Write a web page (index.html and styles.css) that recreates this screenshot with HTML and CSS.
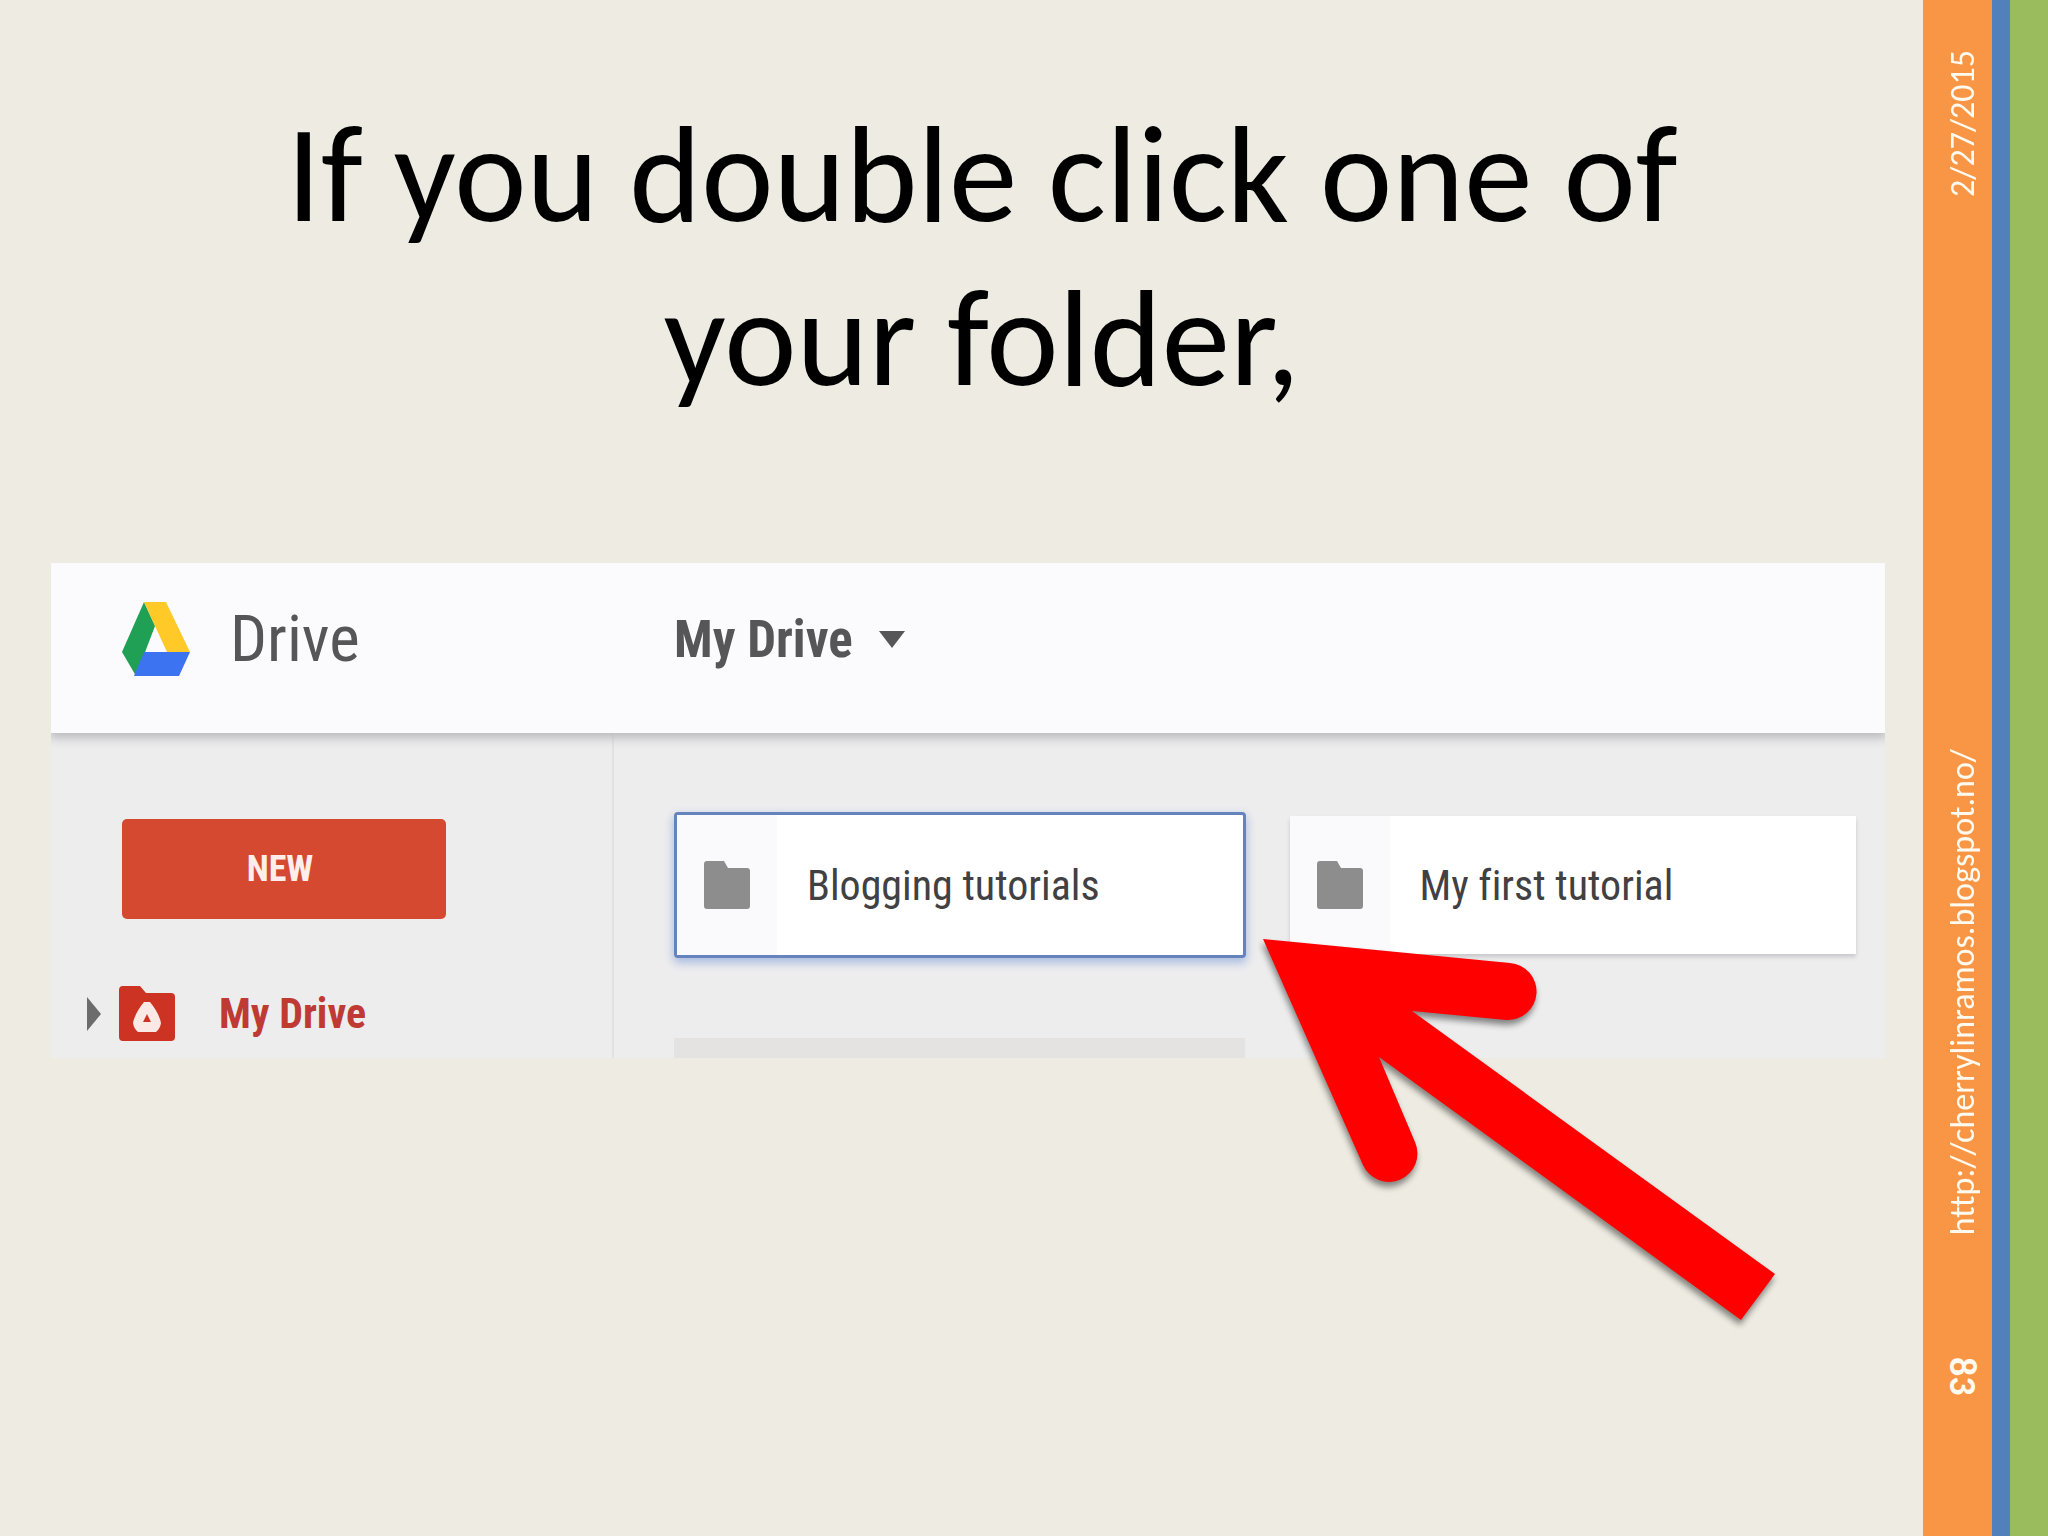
FILE: index.html
```html
<!DOCTYPE html>
<html lang="en">
<head>
<meta charset="utf-8">
<meta name="viewport" content="width=device-width, initial-scale=1">
<title>If you double click one of your folder,</title>
<link rel="stylesheet" href="styles.css">
</head>
<body>
<div class="slide">
  <main class="content">
    <h1 class="title">If you double click one of<br>your folder,</h1>

    <section class="drive" aria-label="Drive">
      <header class="drive-header">
        <div class="brand">
          <svg class="brand-logo" viewBox="0 0 68 74" aria-hidden="true">
            <path fill="#1fa055" d="M22 0 33 24 14 74 0 50z"/>
            <path fill="#ffc928" d="M22 0H44L68 50H45z"/>
            <path fill="#3b73f0" d="M22 50H68L57 74H12z"/>
          </svg>
          <span class="brand-name">Drive</span>
        </div>
        <button class="location" type="button">My Drive
          <svg class="location-caret" viewBox="0 0 26 17" aria-hidden="true"><path fill="#565558" d="M0 0H26L13 17z"/></svg>
        </button>
      </header>

      <div class="drive-body">
        <nav class="sidebar">
          <button class="new-button" type="button">NEW</button>
          <a class="tree-item" href="#">
            <svg class="tree-arrow" viewBox="0 0 14 34" aria-hidden="true"><path fill="#6c6c6c" d="M0 0 14 17 0 34z"/></svg>
            <svg class="tree-icon" viewBox="0 0 56 55" aria-hidden="true">
              <path fill="#cd3322" d="M4 0H21L27 7H52Q56 7 56 11V51Q56 55 52 55H4Q0 55 0 51V4Q0 0 4 0z"/>
              <path fill="#fbe9e5" fill-rule="evenodd" d="M25 16H31Q40 27 42 37 41 43 37 46H19Q15 43 14 37 16 27 25 16zM28 28 24 36H32z"/>
            </svg>
            <span class="tree-label">My Drive</span>
          </a>
        </nav>

        <div class="files">
          <div class="folders">
            <button class="folder folder-selected" type="button">
              <span class="folder-icon"><svg viewBox="0 0 46 48" aria-hidden="true"><path fill="#8e8d8e" d="M3 0H20L24 7H43Q46 7 46 10V45Q46 48 43 48H3Q0 48 0 45V3Q0 0 3 0z"/></svg></span>
              <span class="folder-name">Blogging tutorials</span>
            </button>
            <button class="folder" type="button">
              <span class="folder-icon"><svg viewBox="0 0 46 48" aria-hidden="true"><path fill="#8e8d8e" d="M3 0H20L24 7H43Q46 7 46 10V45Q46 48 43 48H3Q0 48 0 45V3Q0 0 3 0z"/></svg></span>
              <span class="folder-name">My first tutorial</span>
            </button>
          </div>
          <div class="next-row"></div>
        </div>
      </div>

      <svg class="arrow" viewBox="1243 930 550 410" aria-hidden="true">
        <path fill="#ff0000" d="M1263 939 1510 963A28 28 0 0 1 1506 1020L1412 1011 1775 1274 1741 1320 1379 1057 1415 1142A28 28 0 0 1 1363 1165z"/>
      </svg>
    </section>
  </main>

  <aside class="rail">
    <time class="rail-date" datetime="2015-02-27">2/27/2015</time>
    <a class="rail-link" href="http://cherrylinramos.blogspot.no/">http://cherrylinramos.blogspot.no/</a>
    <span class="rail-page">83</span>
  </aside>
  <div class="stripe-blue"></div>
  <div class="stripe-green"></div>
</div>
</body>
</html>
```
FILE: styles.css
```css
* {
  box-sizing: border-box;
}

body {
  margin: 0;
  background: #eeebe2;
  color: #000;
  font-family: Carlito, Lato, sans-serif;
  font-variant-ligatures: none;
}

button {
  border: 0;
  padding: 0;
  background: none;
  color: inherit;
  font: inherit;
  text-align: left;
}

a {
  color: inherit;
  text-decoration: none;
}

svg {
  display: block;
  flex: none;
}

.slide {
  display: flex;
  min-height: 100vh;
}

.content {
  flex: 1;
  min-width: 0;
  padding: 93px 38px 0 51px;
}

.title {
  margin: 0 0 142px;
  padding-left: 28px;
  font-size: 137px;
  font-weight: 400;
  line-height: 164px;
  text-align: center;
}

/* Drive window */

.drive {
  position: relative;
  background: #eeedee;
  font-family: "Roboto Condensed", Roboto, sans-serif;
}

.drive-header,
.drive-body {
  display: grid;
  grid-template-columns: 563px 1fr;
}

.drive-header {
  position: relative;
  align-items: center;
  height: 170px;
  padding-bottom: 18px;
  background: #fbfafc;
  box-shadow: 0 3px 10px 2px #b9b8bb;
  clip-path: inset(0 0 -20px 0);
}

.brand {
  display: flex;
  align-items: center;
  gap: 40px;
  padding-left: 71px;
  color: #565558;
}

.brand-logo {
  width: 68px;
  height: 74px;
}

.brand-name {
  font-size: 65px;
}

.location {
  display: flex;
  align-items: center;
  gap: 26px;
  padding-left: 60px;
  color: #565558;
  font-size: 51px;
  font-weight: 700;
}

.location-caret {
  width: 26px;
  height: 17px;
}

.sidebar {
  padding: 86px 0 0 36px;
  border-right: 2px solid #e2e1e4;
}

.new-button {
  display: block;
  width: 324px;
  height: 100px;
  margin-left: 35px;
  padding-right: 8px;
  border-radius: 5px;
  background: #d4492f;
  color: #fdeeea;
  font-size: 36px;
  font-weight: 700;
  text-align: center;
}

.tree-item {
  display: flex;
  align-items: center;
  height: 55px;
  margin-top: 67px;
  color: #bf3a33;
}

.tree-arrow {
  width: 14px;
  height: 34px;
}

.tree-icon {
  width: 56px;
  height: 55px;
  margin: 0 44px 0 18px;
}

.tree-label {
  font-size: 42px;
  font-weight: 700;
}

.files {
  padding: 79px 29px 0 60px;
}

.folders {
  display: grid;
  grid-template-columns: 571fr 566fr;
  gap: 44px;
}

.folder {
  display: flex;
  height: 138px;
  margin: 4px 0;
  background: #fff;
  box-shadow: 0 3px 4px #c8c7ca;
  color: #414043;
  font-size: 42px;
}

.folder-selected {
  height: 146px;
  margin: 0;
  border: 3px solid #6583bd;
  border-radius: 4px;
  box-shadow: 0 4px 10px 1px #a9bce0;
}

.folder-icon {
  display: flex;
  align-items: center;
  align-self: stretch;
  width: 100px;
  padding-left: 27px;
  background: #faf9fb;
}

.folder-icon svg {
  width: 46px;
  height: 48px;
}

.folder-name {
  align-self: center;
  padding-left: 30px;
}

.next-row {
  width: 571px;
  height: 20px;
  margin-top: 80px;
  background: #e4e3e1;
}

/* Callout arrow over the window */

.arrow {
  position: absolute;
  top: 367px;
  left: 65%;
  width: 550px;
  height: 410px;
  filter: drop-shadow(-1px 5px 3px rgba(0, 0, 0, 0.45));
}

/* Right rail */

.rail {
  display: flex;
  flex-direction: column;
  align-items: center;
  width: 69px;
  padding: 50px 0 0 10px;
  background: #f89645;
  color: #fffaf0;
  font-size: 34px;
  line-height: 40px;
}

.rail-date,
.rail-link {
  writing-mode: vertical-rl;
  transform: rotate(180deg);
}

.rail-link {
  margin-top: 552px;
}

.rail-page {
  margin-top: 122px;
  font-size: 38px;
  font-weight: 700;
  writing-mode: vertical-rl;
}

.stripe-blue {
  width: 18px;
  background: #5180bb;
}

.stripe-green {
  width: 38px;
  background: #9abc5c;
}
```
